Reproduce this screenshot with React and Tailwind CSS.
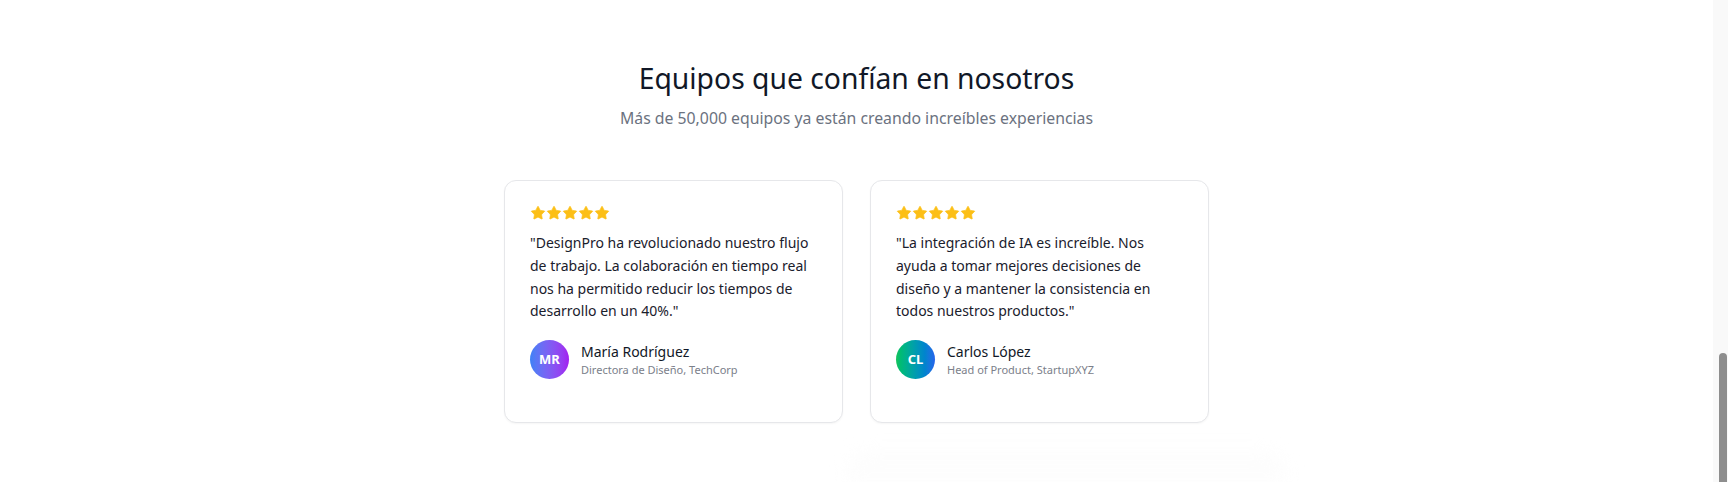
import { Star } from 'lucide-react'

const testimonials = [
    {
        quote: '"DesignPro ha revolucionado nuestro flujo de trabajo. La colaboración en tiempo real nos ha permitido reducir los tiempos de desarrollo en un 40%."',
        initials: 'MR',
        name: 'María Rodríguez',
        role: 'Directora de Diseño, TechCorp',
        avatar: 'bg-gradient-to-r from-[#3b82f6] to-[#a21cf0]',
    },
    {
        quote: '"La integración de IA es increíble. Nos ayuda a tomar mejores decisiones de diseño y a mantener la consistencia en todos nuestros productos."',
        initials: 'CL',
        name: 'Carlos López',
        role: 'Head of Product, StartupXYZ',
        avatar: 'bg-gradient-to-r from-[#16c45a] to-[#2563eb]',
    },
]

const TestimonialCard = ({ t }) => (
    <div className="w-[339px] h-[243px] rounded-xl border border-[#e6e7ea] bg-white px-[25px] pt-6 shadow-[0_1px_2px_rgba(0,0,0,0.04)]">
        <div className="flex text-[#fcbf16]">
            {Array.from({ length: 5 }).map((_, i) => (
                <Star key={i} className="w-4 h-4" fill="currentColor" strokeWidth={1} />
            ))}
        </div>
        <p className="mt-[11px] text-sm leading-[22.75px] text-[#1a202c]">{t.quote}</p>
        <div className="mt-[17px] flex items-center">
            <div className={`w-[39px] h-[39px] rounded-full flex items-center justify-center text-white text-[13px] font-bold ${t.avatar}`}>
                {t.initials}
            </div>
            <div className="ml-3">
                <div className="text-sm leading-5 text-[#111827]">{t.name}</div>
                <div className="text-[11px] leading-4 text-[#7b808a]">{t.role}</div>
            </div>
        </div>
    </div>
)

export default function App() {
    return (
        <div className="h-[482px] overflow-hidden flex bg-white font-['Noto_Sans',sans-serif]">
            <main className="flex-1 flex flex-col items-center pt-[60px]">
                <h2 className="text-[28.3px] leading-9 text-[#111827] mb-2.5">Equipos que confían en nosotros</h2>
                <p className="text-[15.8px] leading-6 text-[#6b7280] mb-[50px]">Más de 50,000 equipos ya están creando increíbles experiencias</p>
                {/* testimonial cards */}
                <div className="flex gap-[27px]">
                    {testimonials.map((t) => (
                        <TestimonialCard key={t.initials} t={t} />
                    ))}
                </div>
                <div className="mt-7 ml-[420px] w-[440px] h-[40px] rounded-t-3xl bg-[#fdfdfd] blur-sm" />
            </main>
            {/* scrollbar */}
            <div className="w-[15px] shrink-0 bg-[#f9f9f9] flex flex-col items-end pr-[1px] pt-[353px]">
                <div className="w-2 flex-1 rounded-t-full bg-[#8e8e8e]" />
            </div>
        </div>
    )
}
